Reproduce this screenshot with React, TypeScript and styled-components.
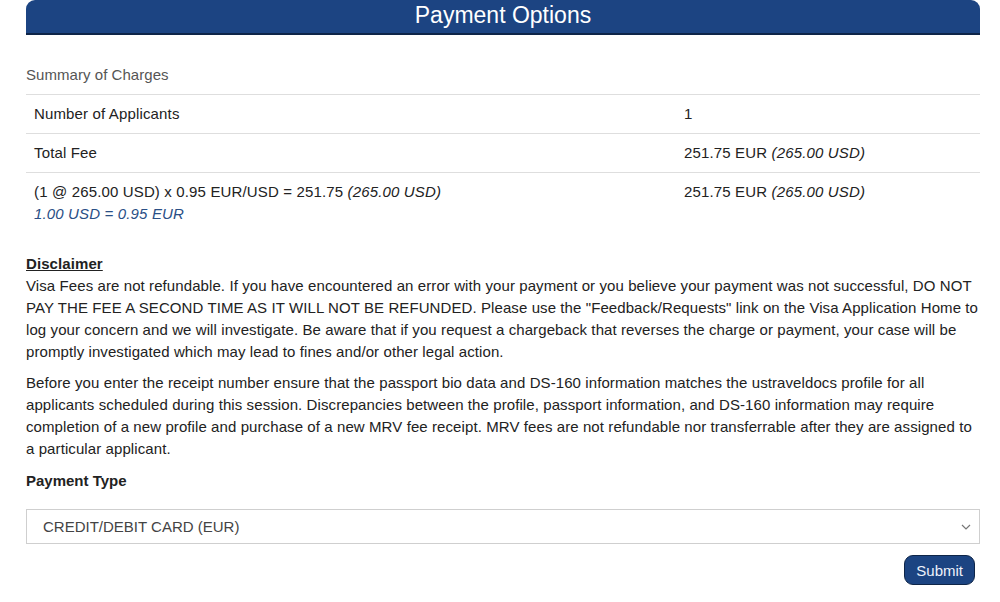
import React from "react";
import styled, { createGlobalStyle } from "styled-components";

const Global = createGlobalStyle`
  html, body { margin: 0; padding: 0; background: #fff; }
  body { font-family: "Liberation Sans", Arial, sans-serif; color: #222; }
`;

const Page = styled.div`
  padding: 0 20px 17px 26px;
  width: 954px;
`;

const Header = styled.div`
  height: 35px;
  box-sizing: border-box;
  background: #1c4482;
  border-bottom: 2px solid #0e2548;
  border-radius: 9px 9px 0 0;
  display: flex;
  align-items: center;
  justify-content: center;
  color: #fff;
  font-size: 23px;
  line-height: 30px;
  padding-bottom: 3px;
`;

const SectionLabel = styled.div`
  margin-top: 29px;
  margin-bottom: 8px;
  font-size: 15px;
  line-height: 22px;
  color: #555;
  letter-spacing: 0.05px;
`;

const Table = styled.div`
  display: flex;
  flex-direction: column;
`;

const Row = styled.div`
  display: grid;
  grid-template-columns: 650px 1fr;
  border-top: 1px solid #dedede;
  font-size: 15px;
  line-height: 22px;
  color: #222;
  letter-spacing: 0.15px;
`;

const Cell = styled.div`
  padding: 8px;
`;

const Note = styled.span`
  font-style: italic;
`;

const Rate = styled.div`
  font-style: italic;
  color: #2a4f86;
`;

const Disclaimer = styled.div`
  margin-top: 20px;
  font-size: 15px;
  line-height: 22px;
  color: #222;
  letter-spacing: 0.09px;
`;

const Title = styled.div`
  font-weight: bold;
  text-decoration: underline;
`;

const Para = styled.p<{ $gap?: number }>`
  margin: ${(p) => p.$gap ?? 0}px 0 0 0;
  font-size: 15px;
  line-height: 22px;
`;

const FieldLabel = styled.div`
  margin-top: 10px;
  font-size: 15px;
  line-height: 22px;
  font-weight: bold;
`;

const SelectBox = styled.div`
  margin-top: 17px;
  height: 35px;
  box-sizing: border-box;
  border: 1px solid #cfcfcf;
  display: flex;
  align-items: center;
  justify-content: space-between;
  padding: 0 8px 0 16px;
  font-size: 15px;
  color: #444;
`;

const Actions = styled.div`
  display: flex;
  justify-content: flex-end;
  margin-top: 11px;
  padding-right: 5px;
`;

const Button = styled.button`
  font-family: "Liberation Sans", Arial, sans-serif;
  height: 30px;
  padding: 0 11px;
  background: #1c4482;
  color: #eef2fa;
  border: 1.5px solid #0e2548;
  border-radius: 9px;
  font-size: 15px;
`;

export default function App() {
  return (
    <>
      <Global />
      <Page>
        <Header>Payment Options</Header>
        <SectionLabel>Summary of Charges</SectionLabel>
        <Table>
          <Row>
            <Cell>Number of Applicants</Cell>
            <Cell>1</Cell>
          </Row>
          <Row>
            <Cell>Total Fee</Cell>
            <Cell>
              251.75 EUR <Note>(265.00 USD)</Note>
            </Cell>
          </Row>
          <Row>
            <Cell>
              (1 @ 265.00 USD) x 0.95 EUR/USD = 251.75 <Note>(265.00 USD)</Note>
              <Rate>1.00 USD = 0.95 EUR</Rate>
            </Cell>
            <Cell>
              251.75 EUR <Note>(265.00 USD)</Note>
            </Cell>
          </Row>
        </Table>
        <Disclaimer>
          <Title>Disclaimer</Title>
          <Para>
            Visa Fees are not refundable. If you have encountered an error with your payment or you believe your payment was not successful, DO NOT PAY THE FEE A SECOND TIME AS IT WILL NOT BE REFUNDED. Please use the "Feedback/Requests" link on the Visa Application Home to log your concern and we will investigate. Be aware that if you request a chargeback that reverses the charge or payment, your case will be promptly investigated which may lead to fines and/or other legal action.
          </Para>
          <Para $gap={9}>
            Before you enter the receipt number ensure that the passport bio data and DS-160 information matches the ustraveldocs profile for all applicants scheduled during this session. Discrepancies between the profile, passport information, and DS-160 information may require completion of a new profile and purchase of a new MRV fee receipt. MRV fees are not refundable nor transferrable after they are assigned to a particular applicant.
          </Para>
        </Disclaimer>
        <FieldLabel>Payment Type</FieldLabel>
        <SelectBox>
          <span>CREDIT/DEBIT CARD (EUR)</span>
          <svg width="10" height="6" viewBox="0 0 10 6">
            <path d="M1 1l4 4 4-4" fill="none" stroke="#777" strokeWidth="1.2" />
          </svg>
        </SelectBox>
        <Actions>
          <Button>Submit</Button>
        </Actions>
      </Page>
    </>
  );
}
